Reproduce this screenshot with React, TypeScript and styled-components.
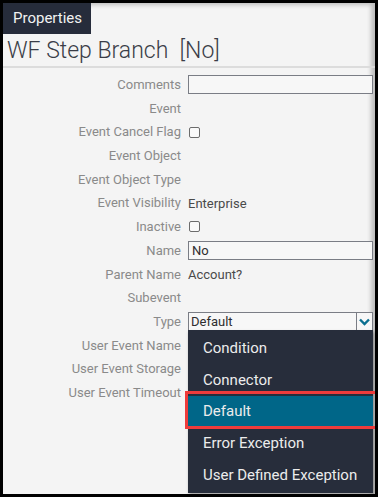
import React from "react";
import styled, { createGlobalStyle } from "styled-components";

const Global = createGlobalStyle`
  html, body { margin: 0; padding: 0; background: #000; }
  body { font-family: Roboto, "Liberation Sans", Arial, sans-serif; }
  * { box-sizing: border-box; }
`;

const Frame = styled.div`
  width: 378px;
  height: 497px;
  border: 3px solid #000;
  background: #f4f4f4;
  position: relative;
  overflow: hidden;
  box-shadow: inset -5px 3px 4px -1px rgba(0, 0, 0, 0.22);
`;

const Tab = styled.div`
  display: inline-block;
  height: 31px;
  padding: 6px 9px 0 10px;
  background: #262c3b;
  color: #f2f2f2;
  font-size: 15px;
  line-height: 19px;
`;

const Title = styled.h1`
  margin: 0;
  padding: 4px 0 0 4px;
  height: 34px;
  font-size: 23px;
  font-weight: 300;
  line-height: 26px;
  color: #3a3d47;
  border-bottom: 2px solid #dcdcdc;
  white-space: pre;
`;

const Form = styled.div`
  display: grid;
  grid-template-columns: 178px 1fr;
  grid-auto-rows: 23.7px;
  column-gap: 7px;
  padding: 5px 2px 0 0;
  position: relative;
`;

const Label = styled.div`
  text-align: right;
  font-size: 13px;
  color: #8a8a8a;
  line-height: 23.7px;
  white-space: nowrap;
`;

const Value = styled.div`
  display: flex;
  align-items: center;
  font-size: 13px;
  color: #4a4a4a;
  position: relative;
`;

const TextBox = styled.div`
  width: 100%;
  height: 19px;
  border: 1px solid #7a7d85;
  background: #f7f7f7;
  font-size: 13px;
  color: #2e2e2e;
  padding-left: 3px;
  line-height: 17px;
`;

const Check = styled.span`
  width: 11px;
  height: 11px;
  border: 1px solid #6c6c6c;
  border-radius: 2px;
  margin-left: 1px;
  background: #fafafa;
`;

const Select = styled.div`
  width: 100%;
  height: 19px;
  border: 1px solid #7a7d85;
  background: #f7f7f7;
  display: flex;
  align-items: center;
  font-size: 13px;
  color: #2e2e2e;
`;

const SelectText = styled.span`
  flex: 1;
  padding-left: 2px;
`;

const Arrow = styled.span`
  width: 16px;
  height: 100%;
  border-left: 1px solid #7a7d85;
  display: flex;
  align-items: center;
  justify-content: center;
`;

const Menu = styled.div`
  position: absolute;
  left: 185px;
  top: 262px;
  width: 185px;
  padding: 2px 0;
  background: #272d3b;
  box-shadow: 1px 2px 3px rgba(0, 0, 0, 0.35);
  z-index: 2;
`;

const Item = styled.div<{ $active?: boolean }>`
  height: 31.8px;
  padding-left: 15px;
  display: flex;
  align-items: center;
  font-size: 15px;
  color: #ececec;
  background: ${(p) => (p.$active ? "#006688" : "transparent")};
  position: relative;
`;

const Highlight = styled.span`
  position: absolute;
  left: -3px;
  right: -10px;
  top: -5px;
  bottom: -2px;
  border: 3px solid #ee3b3b;
  pointer-events: none;
`;

const rows: [string, React.ReactNode][] = [
  ["Comments", <TextBox />],
  ["Event", null],
  ["Event Cancel Flag", <Check />],
  ["Event Object", null],
  ["Event Object Type", null],
  ["Event Visibility", "Enterprise"],
  ["Inactive", <Check />],
  ["Name", <TextBox>No</TextBox>],
  ["Parent Name", "Account?"],
  ["Subevent", null],
  [
    "Type",
    <Select>
      <SelectText>Default</SelectText>
      <Arrow>
        <svg width="11" height="8" viewBox="0 0 11 8">
          <path d="M1 1.5 L5.5 6 L10 1.5" fill="none" stroke="#0b6f90" strokeWidth="2.4" />
        </svg>
      </Arrow>
    </Select>,
  ],
  ["User Event Name", null],
  ["User Event Storage", null],
  ["User Event Timeout", null],
];

const options = ["Condition", "Connector", "Default", "Error Exception", "User Defined Exception"];

export default function App() {
  return (
    <>
      <Global />
      <Frame>
        <Tab>Properties</Tab>
        <Title>{"WF Step Branch  [No]"}</Title>
        <Form>
          {rows.map(([l, v]) => (
            <React.Fragment key={l}>
              <Label>{l}</Label>
              <Value>{v}</Value>
            </React.Fragment>
          ))}
          <Menu>
            {options.map((o) => (
              <Item key={o} $active={o === "Default"}>
                {o}
                {o === "Default" && <Highlight />}
              </Item>
            ))}
          </Menu>
        </Form>
      </Frame>
    </>
  );
}
